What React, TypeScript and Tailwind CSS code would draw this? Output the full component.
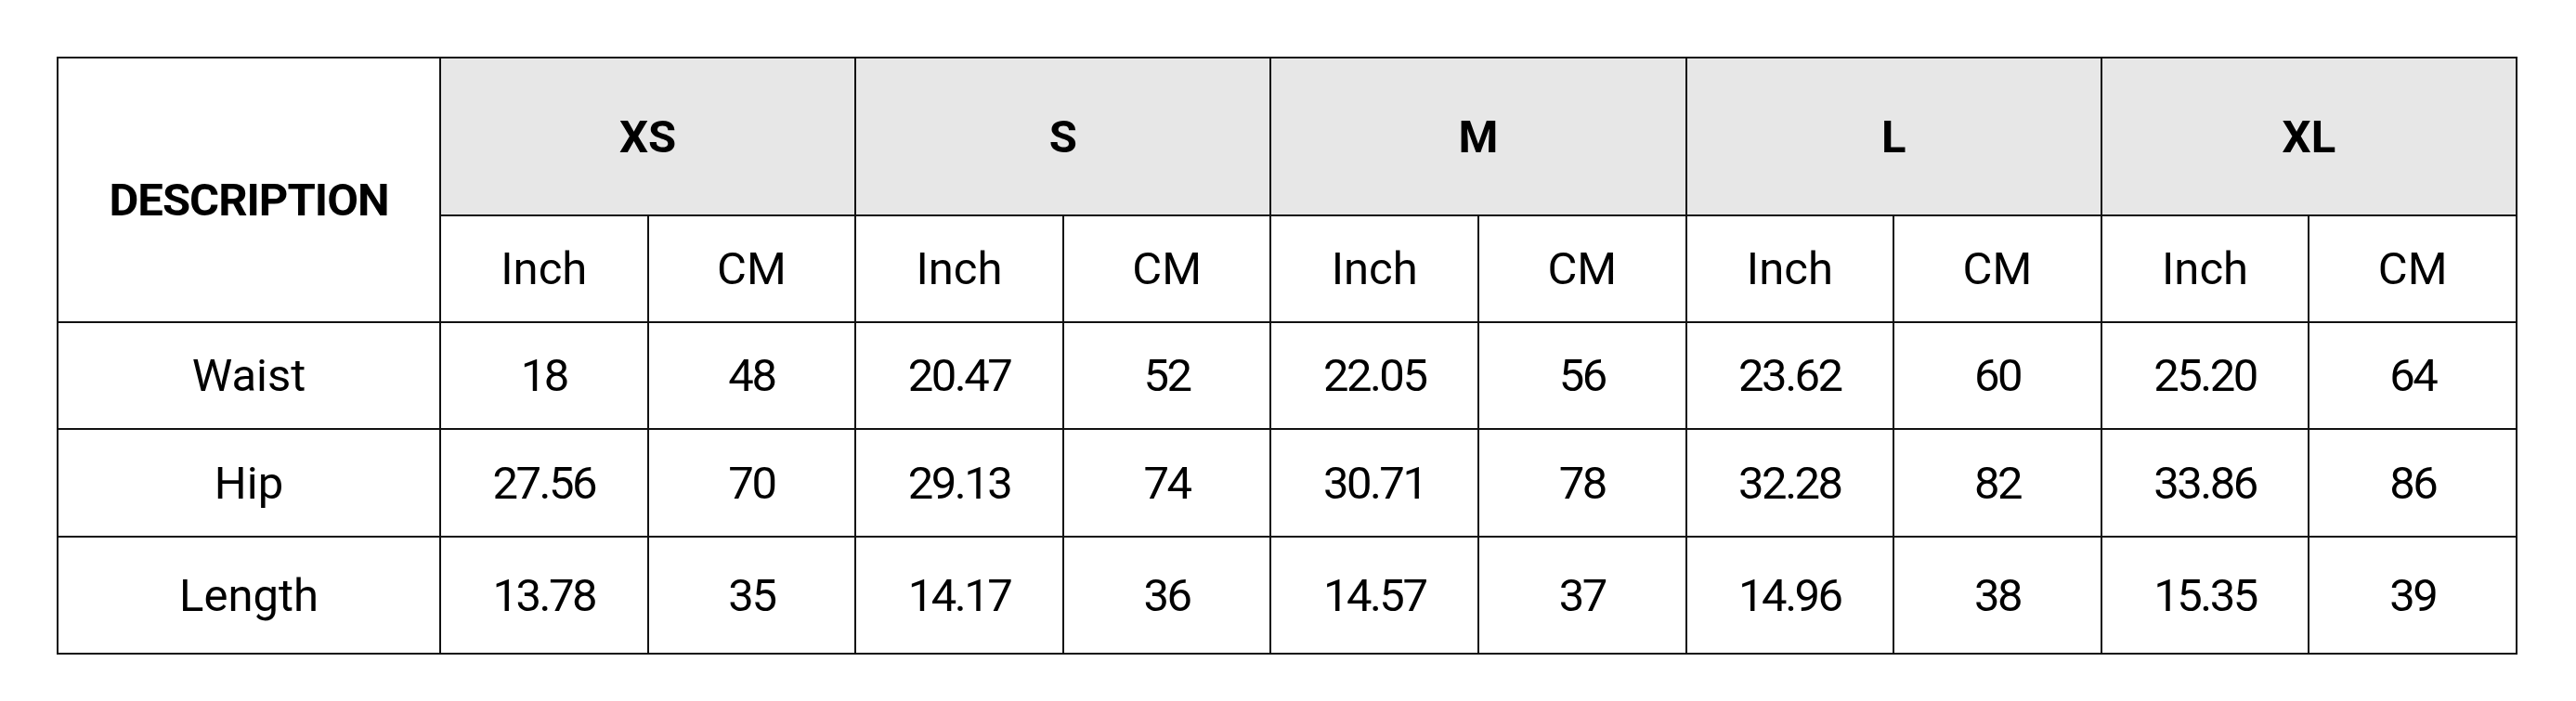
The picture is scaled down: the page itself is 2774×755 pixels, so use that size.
import React from "react";

const sizes = ["XS", "S", "M", "L", "XL"];

const rows = [
  { label: "Waist", values: ["18", "48", "20.47", "52", "22.05", "56", "23.62", "60", "25.20", "64"], h: "h-[115px]" },
  { label: "Hip", values: ["27.56", "70", "29.13", "74", "30.71", "78", "32.28", "82", "33.86", "86"], h: "h-[116px]" },
  { label: "Length", values: ["13.78", "35", "14.17", "36", "14.57", "37", "14.96", "38", "15.35", "39"], h: "h-[126px]" },
];

const cell = "border-2 border-[#111] text-center align-middle p-0";

export default function App() {
  return (
    <div className="w-[2774px] h-[755px] bg-white pl-[61px] pt-[61px] font-['Roboto',sans-serif] text-[49px] text-black leading-none">
      <table className="table-fixed border-collapse w-[2650px]">
        <colgroup>
          <col className="w-[412px]" />
          {Array.from({ length: 10 }).map((_, i) => (
            <col key={i} />
          ))}
        </colgroup>
        <thead>
          {/* size groups */}
          <tr className="h-[170px]">
            <th rowSpan={2} className={`${cell} font-bold pt-[22px] tracking-[-1px]`}>
              DESCRIPTION
            </th>
            {sizes.map((s) => (
              <th key={s} colSpan={2} className={`${cell} bg-[#e7e7e7] font-bold`}>
                {s}
              </th>
            ))}
          </tr>
          <tr className="h-[115px]">
            {sizes.map((s) => (
              <React.Fragment key={s}>
                <th className={`${cell} font-normal`}>Inch</th>
                <th className={`${cell} font-normal`}>CM</th>
              </React.Fragment>
            ))}
          </tr>
        </thead>
        <tbody>
          {rows.map((r) => (
            <tr key={r.label} className={r.h}>
              <td className={cell}>{r.label}</td>
              {r.values.map((v, i) => (
                <td key={i} className={`${cell} tracking-[-2.5px]`}>
                  {v}
                </td>
              ))}
            </tr>
          ))}
        </tbody>
      </table>
    </div>
  );
}
